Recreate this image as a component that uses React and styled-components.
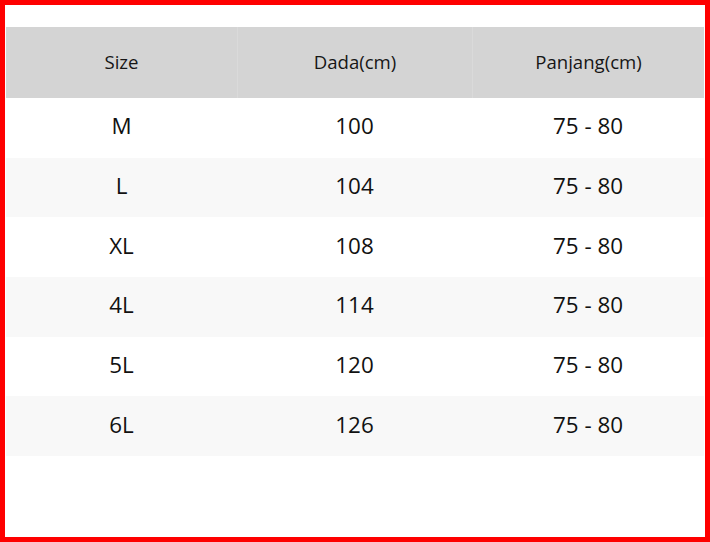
import React from "react";
import styled, { createGlobalStyle } from "styled-components";

const GlobalStyle = createGlobalStyle`
  html, body {
    margin: 0;
    padding: 0;
    background: #ffffff;
  }
  body {
    font-family: "Open Sans", "Noto Sans", sans-serif;
  }
`;

const Frame = styled.div`
  box-sizing: border-box;
  width: 710px;
  height: 542px;
  border: 5px solid #fe0000;
  padding: 22px 1px 0 1px;
  background: #ffffff;
`;

const Table = styled.div`
  display: grid;
  grid-template-columns: 231px 235px 232px;
  grid-template-rows: 71px repeat(6, 59.7px);
`;

const HeadCell = styled.div`
  display: flex;
  align-items: center;
  justify-content: center;
  padding-bottom: 2px;
  background: #d4d4d4;
  color: #161616;
  font-size: 18.6px;
  border-left: ${(p) => (p.$first ? "none" : "1px solid #dadada")};
`;

const Cell = styled.div`
  display: flex;
  align-items: center;
  justify-content: center;
  padding-bottom: 4px;
  background: ${(p) => (p.$striped ? "#f8f8f8" : "#ffffff")};
  color: #111111;
  font-size: 22.4px;
`;

const sizes = [
  ["M", "100", "75 - 80"],
  ["L", "104", "75 - 80"],
  ["XL", "108", "75 - 80"],
  ["4L", "114", "75 - 80"],
  ["5L", "120", "75 - 80"],
  ["6L", "126", "75 - 80"],
];

export default function App() {
  return (
    <>
      <GlobalStyle />
      <Frame>
        <Table>
          <HeadCell $first>Size</HeadCell>
          <HeadCell>Dada(cm)</HeadCell>
          <HeadCell>Panjang(cm)</HeadCell>
          {sizes.map((row, i) =>
            row.map((val, j) => (
              <Cell key={`${i}-${j}`} $striped={i % 2 === 1}>
                {val}
              </Cell>
            ))
          )}
        </Table>
      </Frame>
    </>
  );
}
